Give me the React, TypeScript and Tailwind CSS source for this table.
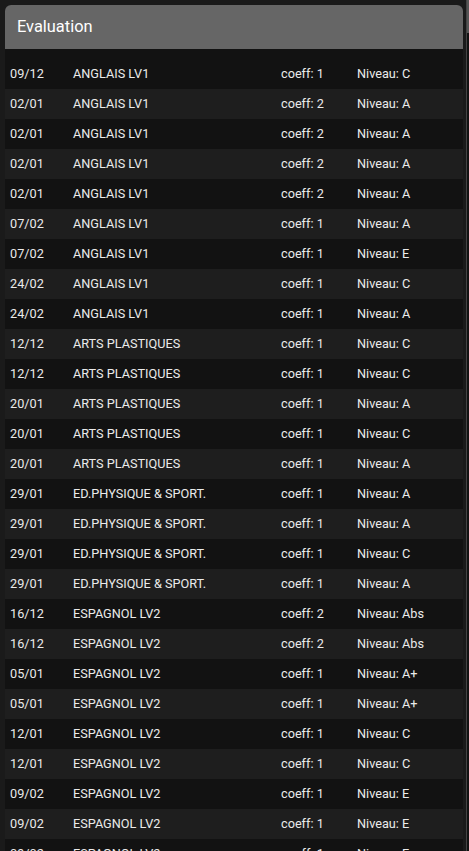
import React from 'react'

type Evaluation = {
  date: string
  subject: string
  coeff: number
  level: string
}

const evaluations: Evaluation[] = [
  { date: '09/12', subject: 'ANGLAIS LV1', coeff: 1, level: 'C' },
  { date: '02/01', subject: 'ANGLAIS LV1', coeff: 2, level: 'A' },
  { date: '02/01', subject: 'ANGLAIS LV1', coeff: 2, level: 'A' },
  { date: '02/01', subject: 'ANGLAIS LV1', coeff: 2, level: 'A' },
  { date: '02/01', subject: 'ANGLAIS LV1', coeff: 2, level: 'A' },
  { date: '07/02', subject: 'ANGLAIS LV1', coeff: 1, level: 'A' },
  { date: '07/02', subject: 'ANGLAIS LV1', coeff: 1, level: 'E' },
  { date: '24/02', subject: 'ANGLAIS LV1', coeff: 1, level: 'C' },
  { date: '24/02', subject: 'ANGLAIS LV1', coeff: 1, level: 'A' },
  { date: '12/12', subject: 'ARTS PLASTIQUES', coeff: 1, level: 'C' },
  { date: '12/12', subject: 'ARTS PLASTIQUES', coeff: 1, level: 'C' },
  { date: '20/01', subject: 'ARTS PLASTIQUES', coeff: 1, level: 'A' },
  { date: '20/01', subject: 'ARTS PLASTIQUES', coeff: 1, level: 'C' },
  { date: '20/01', subject: 'ARTS PLASTIQUES', coeff: 1, level: 'A' },
  { date: '29/01', subject: 'ED.PHYSIQUE & SPORT.', coeff: 1, level: 'A' },
  { date: '29/01', subject: 'ED.PHYSIQUE & SPORT.', coeff: 1, level: 'A' },
  { date: '29/01', subject: 'ED.PHYSIQUE & SPORT.', coeff: 1, level: 'C' },
  { date: '29/01', subject: 'ED.PHYSIQUE & SPORT.', coeff: 1, level: 'A' },
  { date: '16/12', subject: 'ESPAGNOL LV2', coeff: 2, level: 'Abs' },
  { date: '16/12', subject: 'ESPAGNOL LV2', coeff: 2, level: 'Abs' },
  { date: '05/01', subject: 'ESPAGNOL LV2', coeff: 1, level: 'A+' },
  { date: '05/01', subject: 'ESPAGNOL LV2', coeff: 1, level: 'A+' },
  { date: '12/01', subject: 'ESPAGNOL LV2', coeff: 1, level: 'C' },
  { date: '12/01', subject: 'ESPAGNOL LV2', coeff: 1, level: 'C' },
  { date: '09/02', subject: 'ESPAGNOL LV2', coeff: 1, level: 'E' },
  { date: '09/02', subject: 'ESPAGNOL LV2', coeff: 1, level: 'E' },
  { date: '09/02', subject: 'ESPAGNOL LV2', coeff: 1, level: 'E' },
]

function EvaluationRow({ item, index }: { item: Evaluation; index: number }) {
  // alternate row shading
  const bg = index % 2 === 0 ? 'bg-[#121212]' : 'bg-[#1e1e1e]'
  return (
    <div className={`flex h-[30px] shrink-0 items-center text-[12.7px] text-[#ebebeb] ${bg}`}>
      <span className="w-[68px] shrink-0 pl-[5px]">{item.date}</span>
      <span className="w-[208px] shrink-0">{item.subject}</span>
      <span className="w-[76px] shrink-0">coeff: {item.coeff}</span>
      <span className="flex-1">Niveau: {item.level}</span>
    </div>
  )
}

export default function App() {
  return (
    <div
      className="flex h-[851px] w-[469px] overflow-hidden bg-[#1a1a1a]"
      style={{ fontFamily: 'Roboto, "Liberation Sans", sans-serif' }}
    >
      {/* Modal */}
      <div className="ml-[5px] mt-[5px] flex w-[458px] shrink-0 flex-col overflow-hidden rounded-t-[6px] bg-[#121212]">
        <div className="flex h-[44px] shrink-0 items-center bg-[#666666] pl-[12px] text-[16.4px] text-white">
          Evaluation
        </div>
        <div className="flex flex-col pt-[10px]">
          {evaluations.map((item, i) => (
            <EvaluationRow key={i} item={item} index={i} />
          ))}
        </div>
      </div>

      {/* Page behind the modal, right edge */}
      <div className="ml-[3px] w-px shrink-0 bg-[#444444]" />
      <div className="flex flex-1 flex-col">
        <div className="h-[33px] bg-[#555555]" />
        <div className="flex-1 bg-[#121212]" />
      </div>
    </div>
  )
}
